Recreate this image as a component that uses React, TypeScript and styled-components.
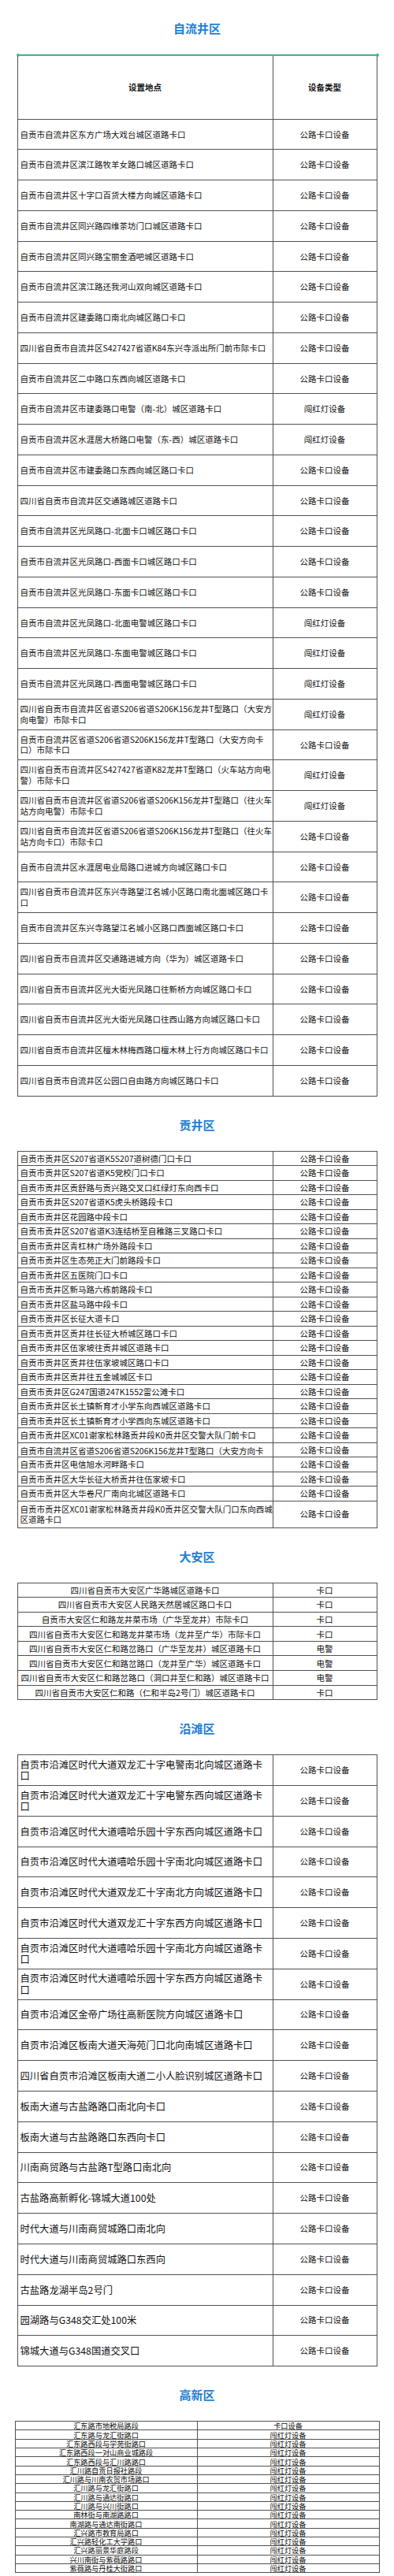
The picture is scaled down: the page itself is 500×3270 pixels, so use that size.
import React from 'react'
import styled, { createGlobalStyle, css } from 'styled-components'

const ROAD = '公路卡口设备'
const RED = '闯红灯设备'

type Row = { place: string; kind: string; clipped?: boolean }

const row = (place: string, kind: string = ROAD, clipped = false): Row => ({ place, kind, clipped })

const ziliujing: Row[] = [
  row('自贡市自流井区东方广场大戏台城区道路卡口'),
  row('自贡市自流井区滨江路牧羊女路口城区道路卡口'),
  row('自贡市自流井区十字口百货大楼方向城区道路卡口'),
  row('自贡市自流井区同兴路四维茶坊门口城区道路卡口'),
  row('自贡市自流井区同兴路宝丽金酒吧城区道路卡口'),
  row('自贡市自流井区滨江路还我河山双向城区道路卡口'),
  row('自贡市自流井区建委路口南北向城区路口卡口'),
  row('四川省自贡市自流井区S427427省道K84东兴寺派出所门前市际卡口'),
  row('自贡市自流井区二中路口东西向城区道路卡口'),
  row('自贡市自流井区市建委路口电警（南-北）城区道路卡口', RED),
  row('自贡市自流井区水涯居大桥路口电警（东-西）城区道路卡口', RED),
  row('自贡市自流井区市建委路口东西向城区路口卡口'),
  row('四川省自贡市自流井区交通路城区道路卡口'),
  row('自贡市自流井区光凤路口-北面卡口城区路口卡口'),
  row('自贡市自流井区光凤路口-西面卡口城区路口卡口'),
  row('自贡市自流井区光凤路口-东面卡口城区路口卡口'),
  row('自贡市自流井区光凤路口-北面电警城区路口卡口', RED),
  row('自贡市自流井区光凤路口-东面电警城区路口卡口', RED),
  row('自贡市自流井区光凤路口-西面电警城区路口卡口', RED),
  row('四川省自贡市自流井区省道S206省道S206K156龙井T型路口（大安方\n向电警）市际卡口', RED),
  row('自贡市自流井区省道S206省道S206K156龙井T型路口（大安方向卡\n口）市际卡口'),
  row('四川省自贡市自流井区S427427省道K82龙井T型路口（火车站方向电\n警）市际卡口', RED),
  row('四川省自贡市自流井区省道S206省道S206K156龙井T型路口（往火车\n站方向电警）市际卡口', RED),
  row('四川省自贡市自流井区省道S206省道S206K156龙井T型路口（往火车\n站方向卡口）市际卡口'),
  row('自贡市自流井区水涯居电业局路口进城方向城区路口卡口'),
  row('四川省自贡市自流井区东兴寺路望江名城小区路口南北面城区路口卡\n口'),
  row('自贡市自流井区东兴寺路望江名城小区路口西面城区路口卡口'),
  row('四川省自贡市自流井区交通路进城方向（华为）城区道路卡口'),
  row('四川省自贡市自流井区光大街光凤路口往新桥方向城区路口卡口'),
  row('四川省自贡市自流井区光大街光凤路口往西山路方向城区路口卡口'),
  row('四川省自贡市自流井区檀木林梅西路口檀木林上行方向城区路口卡口'),
  row('四川省自贡市自流井区公园口自由路方向城区路口卡口'),
]

const gongjing: Row[] = [
  row('自贡市贡井区S207省道K5S207道树德门口卡口'),
  row('自贡市贡井区S207省道K5党校门口卡口'),
  row('自贡市贡井区贡舒路与贡兴路交叉口红绿灯东向西卡口'),
  row('自贡市贡井区S207省道K5虎头桥路段卡口'),
  row('自贡市贡井区花园路中段卡口'),
  row('自贡市贡井区S207省道K3连结桥至自稚路三叉路口卡口'),
  row('自贡市贡井区青杠林广场外路段卡口'),
  row('自贡市贡井区生态苑正大门前路段卡口'),
  row('自贡市贡井区五医院门口卡口'),
  row('自贡市贡井区新马路六栋前路段卡口'),
  row('自贡市贡井区盐马路中段卡口'),
  row('自贡市贡井区长征大道卡口'),
  row('自贡市贡井区贡井往长征大桥城区路口卡口'),
  row('自贡市贡井区伍家坡往贡井城区道路卡口'),
  row('自贡市贡井区贡井往伍家坡城区路口卡口'),
  row('自贡市贡井区贡井往五金城城区卡口'),
  row('自贡市贡井区G247国道247K1552雷公滩卡口'),
  row('自贡市贡井区长土镇新育才小学东向西城区道路卡口'),
  row('自贡市贡井区长土镇新育才小学西向东城区道路卡口'),
  row('自贡市贡井区XC01谢家松林路贡井段K0贡井区交警大队门前卡口'),
  row('自贡市自流井区省道S206省道S206K156龙井T型路口（大安方向卡\n口）市际卡口', ROAD, true),
  row('自贡市贡井区电信旭水河畔路卡口'),
  row('自贡市贡井区大华长征大桥贡井往伍家坡卡口'),
  row('自贡市贡井区大华卷尺厂南向北城区道路卡口'),
  row('自贡市贡井区XC01谢家松林路贡井段K0贡井区交警大队门口东向西城\n区道路卡口'),
]

const daan: Row[] = [
  row('四川省自贡市大安区广华路城区道路卡口', '卡口'),
  row('四川省自贡市大安区人民路天然居城区路口卡口', '卡口'),
  row('自贡市大安区仁和路龙井菜市场（广华至龙井）市际卡口', '卡口'),
  row('四川省自贡市大安区仁和路龙井菜市场（龙井至广华）市际卡口', '卡口'),
  row('四川省自贡市大安区仁和路岔路口（广华至龙井）城区道路卡口', '电警'),
  row('四川省自贡市大安区仁和路岔路口（龙井至广华）城区道路卡口', '电警'),
  row('四川省自贡市大安区仁和路岔路口（洞口井至仁和路）城区道路卡口', '电警'),
  row('四川省自贡市大安区仁和路（仁和半岛2号门）城区道路卡口', '卡口'),
]

const yantan: Row[] = [
  row('自贡市沿滩区时代大道双龙汇十字电警南北向城区道路卡\n口'),
  row('自贡市沿滩区时代大道双龙汇十字电警东西向城区道路卡\n口'),
  row('自贡市沿滩区时代大道嘻哈乐园十字东西向城区道路卡口'),
  row('自贡市沿滩区时代大道嘻哈乐园十字南北向城区道路卡口'),
  row('自贡市沿滩区时代大道双龙汇十字南北方向城区道路卡口'),
  row('自贡市沿滩区时代大道双龙汇十字东西方向城区道路卡口'),
  row('自贡市沿滩区时代大道嘻哈乐园十字南北方向城区道路卡\n口'),
  row('自贡市沿滩区时代大道嘻哈乐园十字东西方向城区道路卡\n口'),
  row('自贡市沿滩区金帝广场往高新医院方向城区道路卡口'),
  row('自贡市沿滩区板南大道天海苑门口北向南城区道路卡口'),
  row('四川省自贡市沿滩区板南大道二小人脸识别城区道路卡口'),
  row('板南大道与古盐路路口南北向卡口'),
  row('板南大道与古盐路路口东西向卡口'),
  row('川南商贸路与古盐路T型路口南北向'),
  row('古盐路高新孵化-锦城大道100处'),
  row('时代大道与川南商贸城路口南北向'),
  row('时代大道与川南商贸城路口东西向'),
  row('古盐路龙湖半岛2号门'),
  row('园湖路与G348交汇处100米'),
  row('锦城大道与G348国道交叉口'),
]

const gaoxin: Row[] = [
  row('汇东路市地税局路段', '卡口设备'),
  row('汇东路与龙汇街路口', RED),
  row('汇东路西段与学苑街路口', RED),
  row('汇东路西段一对山商业城路段', RED),
  row('汇东路西段与汇川路路口', RED),
  row('汇川路自贡日报社路段', RED),
  row('汇川路与川南农贸市场路口', RED),
  row('汇川路与龙汇街路口', RED),
  row('汇川路与通达街路口', RED),
  row('汇川路与兴川街路口', RED),
  row('南林街与南湖路路口', RED),
  row('南湖路与通达南街路口', RED),
  row('汇兴路市教育局路口', RED),
  row('汇兴路轻化工大学路口', RED),
  row('汇兴路丽景华庭路段', RED),
  row('兴川南街与紫薇路路口', RED),
  row('紫薇路与丹桂大街路口', RED),
]

// 每个区的表格尺寸各不相同，按截图量出来的数值
type Spec = {
  width: number
  firstCol: number
  rowH: number
  tallRowH?: number
  font: number
  kindFont?: number
  lineH: number
  placeAlign: 'left' | 'center'
  accent?: boolean
}

const LINE = '#525252'

const GlobalStyle = createGlobalStyle`
  html, body {
    margin: 0;
    padding: 0;
    background: #fff;
  }
  body {
    font-family: "Noto Sans CJK SC", "Noto Sans", sans-serif;
    color: #111;
  }
`

const Page = styled.div`
  width: 500px;
  padding-bottom: 6px;
`

const Section = styled.section`
  padding-top: 26px;
`

const Title = styled.h2`
  margin: 0 0 23px;
  text-align: center;
  font-size: 15px;
  line-height: 20px;
  font-weight: 700;
  color: #1f7fd4;
`

const TableWrap = styled.div<{ $width: number; $accent?: boolean }>`
  position: relative;
  width: ${({ $width }) => $width}px;
  margin: 0 auto;
  ${({ $accent }) =>
    $accent &&
    css`
      &::before,
      &::after {
        content: '';
        position: absolute;
        top: -1px;
        width: 4px;
        height: 4px;
        border-radius: 50%;
        background: #3db68c;
      }
      &::before {
        left: -1px;
      }
      &::after {
        right: -2px;
      }
    `}
`

const Table = styled.table<{ $font: number; $lineH: number; $accent?: boolean }>`
  width: 100%;
  border-collapse: collapse;
  table-layout: fixed;
  font-size: ${({ $font }) => $font}px;
  line-height: ${({ $lineH }) => $lineH}px;
  ${({ $accent }) =>
    $accent &&
    css`
      border-top: 2px solid #3db68c;
    `}
`

const Tr = styled.tr<{ $h: number }>`
  height: ${({ $h }) => $h}px;
`

const HeadCell = styled.th`
  border: 1px solid ${LINE};
  font-weight: 700;
  text-align: center;
  padding: 0;
  color: #111;
`

const PlaceCell = styled.td<{ $align: 'left' | 'center' }>`
  border: 1px solid ${LINE};
  padding: 0 2px 0 ${({ $align }) => ($align === 'left' ? 3 : 2)}px;
  text-align: ${({ $align }) => $align};
  vertical-align: middle;
  white-space: pre;
`

const KindCell = styled.td<{ $font?: number }>`
  border: 1px solid ${LINE};
  padding: 0;
  text-align: center;
  vertical-align: middle;
  white-space: nowrap;
  ${({ $font }) =>
    $font &&
    css`
      font-size: ${$font}px;
    `}
`

const Clipped = styled.div<{ $h: number }>`
  height: ${({ $h }) => $h}px;
  padding-top: 3px;
  box-sizing: border-box;
  line-height: 13px;
  overflow: hidden;
`

type BlockProps = {
  title: string
  rows: Row[]
  spec: Spec
  header?: boolean
}

const District = ({ title, rows, spec, header }: BlockProps) => (
  <Section>
    <Title>{title}</Title>
    <TableWrap $width={spec.width} $accent={spec.accent}>
      <Table $font={spec.font} $lineH={spec.lineH} $accent={spec.accent}>
        <colgroup>
          <col style={{ width: spec.firstCol }} />
          <col />
        </colgroup>
        <tbody>
          {header && (
            <Tr $h={81}>
              <HeadCell>设置地点</HeadCell>
              <HeadCell>设备类型</HeadCell>
            </Tr>
          )}
          {rows.map((r, i) => {
            const wrapped = r.place.includes('\n') && !r.clipped
            const h = wrapped && spec.tallRowH ? spec.tallRowH : spec.rowH
            return (
              <Tr key={i} $h={h}>
                <PlaceCell $align={spec.placeAlign}>
                  {r.clipped ? <Clipped $h={spec.rowH - 1}>{r.place}</Clipped> : r.place}
                </PlaceCell>
                <KindCell $font={spec.kindFont}>{r.kind}</KindCell>
              </Tr>
            )
          })}
        </tbody>
      </Table>
    </TableWrap>
  </Section>
)

const specs: Record<string, Spec> = {
  ziliujing: { width: 457, firstCol: 324, rowH: 38.75, font: 10.5, lineH: 13.7, placeAlign: 'left', accent: true },
  gongjing: { width: 457, firstCol: 324, rowH: 18.5, tallRowH: 34, font: 10.5, lineH: 13.5, placeAlign: 'left' },
  daan: { width: 457, firstCol: 324, rowH: 18.6, font: 10.5, lineH: 13, placeAlign: 'center' },
  yantan: { width: 457, firstCol: 324, rowH: 38.8, font: 12.3, kindFont: 10.5, lineH: 14.3, placeAlign: 'left' },
  gaoxin: { width: 463, firstCol: 231, rowH: 11.3, font: 9.2, lineH: 10, placeAlign: 'center' },
}

export default function App() {
  return (
    <Page>
      <GlobalStyle />
      <District title="自流井区" rows={ziliujing} spec={specs.ziliujing} header />
      <District title="贡井区" rows={gongjing} spec={specs.gongjing} />
      <District title="大安区" rows={daan} spec={specs.daan} />
      <District title="沿滩区" rows={yantan} spec={specs.yantan} />
      <District title="高新区" rows={gaoxin} spec={specs.gaoxin} />
    </Page>
  )
}
